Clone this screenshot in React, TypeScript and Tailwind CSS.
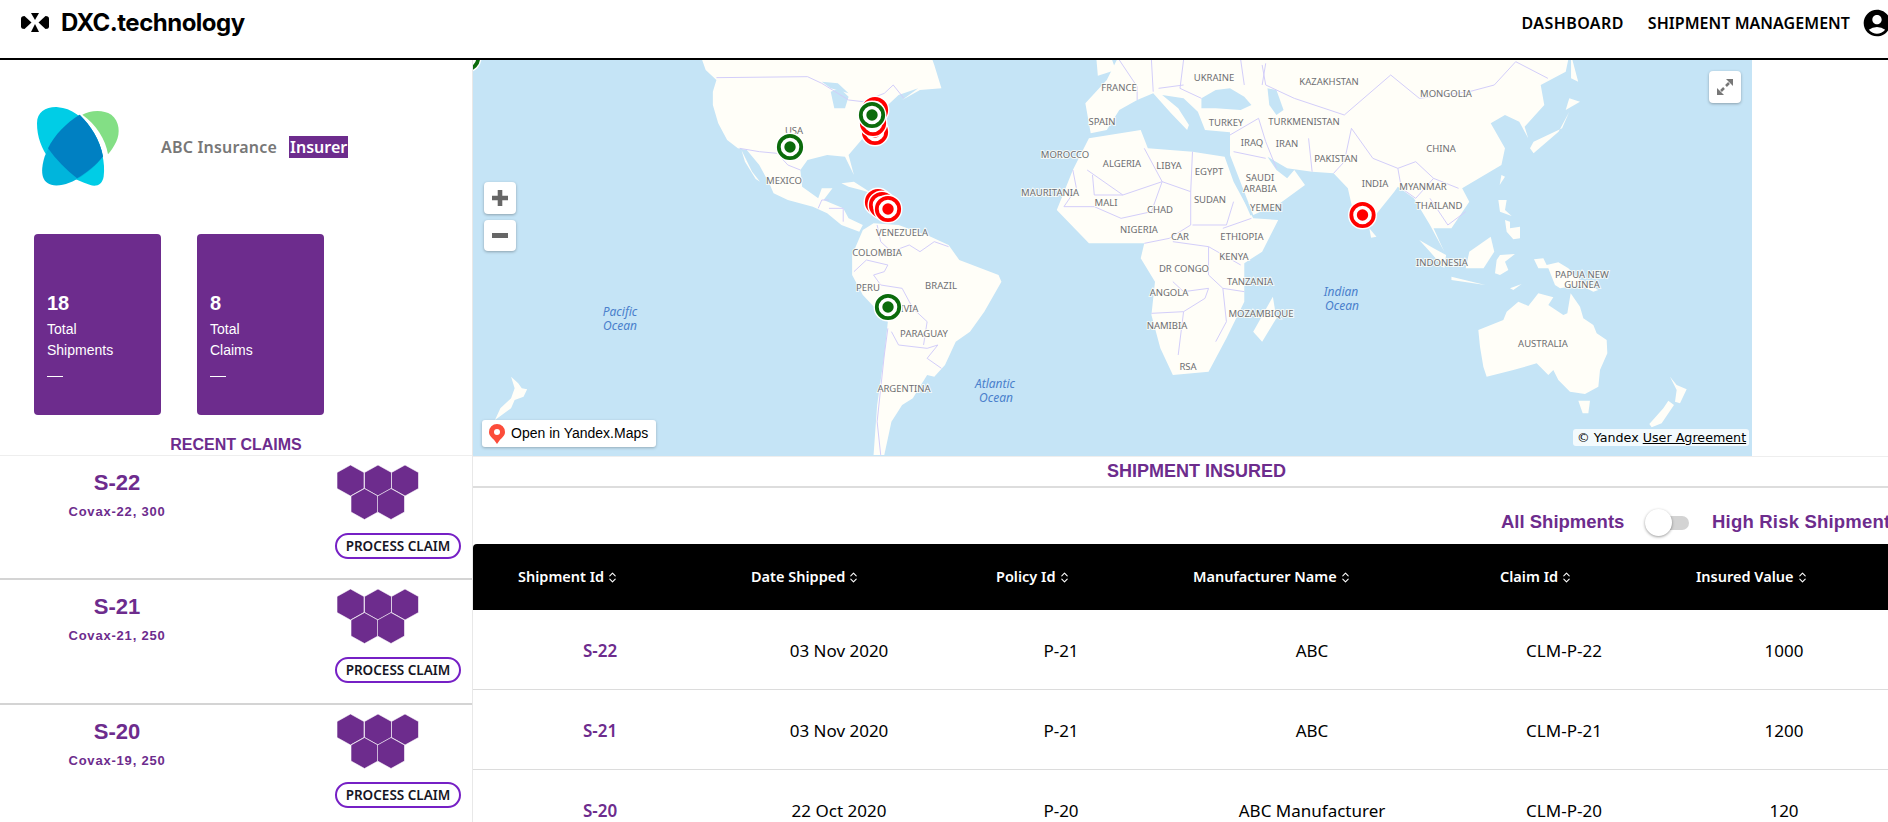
import { ChevronsUpDown } from "lucide-react";
import { MdAccountCircle } from "react-icons/md";

const SEA = "#c5e4f6";
const LAND = "#fffef8";
const LINE = "#d3cefa";

// land outlines, traced per map area (see the transforms on the groups below)
const westLand = [
  "645,0 660,45 690,75 680,110 680,150 695,205 720,255 750,280 775,285 810,330 840,390 850,415 890,435 960,455 1000,475 1040,510 1090,530 1100,510 1060,490 1045,460 990,435 1015,400 985,400 975,430 930,395 925,345 945,315 1000,300 1050,305 1075,360 1060,300 1100,250 1130,200 1170,150 1200,120 1255,100 1210,135 1260,105 1320,100 1300,30 1290,0",
  "760,285 790,350 812,380 800,372 770,320",
  "1100,525 1130,505 1200,510 1290,545 1340,570 1370,615 1480,660 1488,680 1440,770 1400,830 1360,860 1330,930 1300,965 1280,960 1240,1030 1210,1050 1180,1100 1160,1200 1130,1200 1140,1050 1160,900 1170,800 1100,720 1070,660 1070,600",
  "1040,385 1075,380 1125,415 1095,405 1060,395",
  "115,965 135,985 145,1000 160,1003 150,1025 125,1035 115,1060 70,1095 85,1060 115,1030 125,1000",
];

const eastLand = [
  "250,0 215,75 155,145 170,235 215,225 250,165 300,135 345,115 395,175 440,225 445,210 415,160 370,120 430,130 470,170 490,225 560,232 560,300 625,480 700,445 770,390 740,345 720,370 690,345 665,305 720,340 790,350 850,355 890,400 905,470 945,510 1020,410 1030,395 1075,430 1120,510 1160,590 1130,520 1180,520 1230,440 1210,400 1320,330 1330,280 1290,205 1330,180 1370,200 1395,250 1385,215 1440,150 1430,90 1500,50 1510,0",
  "165,250 310,225 330,280 455,290 545,305 570,380 625,490 695,495 650,590 600,625 600,740 550,850 500,950 400,960 365,880 340,780 350,680 310,610 320,565 165,565 75,465 120,345",
  "680,725 690,790 650,860 625,830",
  "950,520 970,545 955,548",
  "1400,280 1410,260 1490,220 1510,170 1480,230 1410,295",
  "1510,130 1540,140 1500,165",
  "1515,0 1535,80 1515,70",
  "1320,360 1330,365 1315,390",
  "1090,555 1130,580 1165,600 1160,640 1120,590",
  "1230,590 1290,545 1300,590 1270,640 1220,640",
  "1180,665 1275,690 1180,675",
  "185,0 225,0 240,45 190,62",
];

const southEastLand = [
  "-5,390 70,360 80,335 115,305 145,318 175,280 220,292 205,315 250,345 262,340 272,280 300,320 310,355 340,375 350,400 380,420 382,460 360,510 355,560 315,582 270,575 235,540 220,510 205,525 170,490 100,510 20,530 10,500 0,440",
  "295,602 330,602 325,640 308,640",
  "570,530 590,555 620,568 600,610 585,605 590,570",
  "565,602 582,615 545,670 515,682 508,672 550,625",
  "162,178 190,175 200,195 235,187 265,205 300,240 355,270 340,275 300,255 240,265 225,255 205,205 175,205",
  "60,165 105,162 75,185 85,210 60,225 45,220 50,180",
  "90,265 125,252 100,270",
  "55,0 80,0 75,30 95,48 60,35",
  "75,60 90,65 90,85 120,80 120,115 100,118 80,95",
];

const westLines = [
  "690,68 945,65 985,85 1015,105 1060,135 1100,140 1160,115 1185,90 1215,130",
  "755,280 810,290 860,295 890,330 925,345",
  "975,460 985,435 1005,435",
  "1005,460 1045,460 1045,500",
  "1140,510 1150,560 1180,590 1230,570 1260,590 1300,560 1340,575",
  "1075,650 1110,615 1170,630 1160,650 1130,660 1150,690 1210,700 1240,760 1280,800 1270,870",
  "1180,830 1200,870 1280,880 1310,870 1280,910 1320,940",
  "1170,820 1160,900 1150,1000 1140,1100 1150,1200",
];

const eastLines = [
  "160,345 260,420 370,380 450,410 455,290",
  "320,280 370,380",
  "175,360 180,420 260,420",
  "120,345 130,400 95,455 180,455 255,490 340,470 370,380",
  "450,410 450,510 390,550 320,565",
  "455,510 550,510 570,440",
  "540,520 620,490",
  "400,560 500,575 590,630",
  "500,575 500,660 540,700 600,710",
  "400,680 430,710 500,700 490,730 430,770 340,775",
  "430,770 415,900",
  "540,700 550,800 520,860",
  "650,30 660,90 740,130 880,180 1010,60 1090,130 1230,110 1300,90 1360,20 1450,70",
  "900,220 880,320 850,355",
  "780,250 790,350",
  "640,190 660,260 690,340",
  "560,240 640,190",
  "570,290 660,310",
  "900,220 960,310 1030,340 1080,320 1130,370 1200,400",
  "1030,340 1040,400 1080,430 1130,370",
  "1120,430 1170,510 1220,470",
  "250,15 300,95 300,135",
  "340,15 345,110",
  "430,15 420,100 480,130",
  "590,15 600,90",
  "360,100 430,90",
  "660,25 650,90",
];

const mapLabels: [string, number, number][] = [
  ["USA", 794, 130], ["MEXICO", 784, 180], ["VENEZUELA", 902, 232], ["COLOMBIA", 877, 252],
  ["PERU", 868, 287], ["BRAZIL", 941, 285], ["BOLIVIA", 900, 308], ["PARAGUAY", 924, 333],
  ["ARGENTINA", 904, 388], ["FRANCE", 1119, 87], ["UKRAINE", 1214, 77], ["KAZAKHSTAN", 1329, 81],
  ["MONGOLIA", 1446, 93], ["SPAIN", 1102, 121], ["TURKEY", 1226, 122], ["TURKMENISTAN", 1304, 121],
  ["IRAQ", 1252, 142], ["IRAN", 1287, 143], ["CHINA", 1441, 148], ["MOROCCO", 1065, 154],
  ["ALGERIA", 1122, 163], ["LIBYA", 1169, 165], ["EGYPT", 1209, 171], ["PAKISTAN", 1336, 158],
  ["SAUDI", 1260, 177], ["ARABIA", 1260, 188], ["INDIA", 1375, 183], ["MYANMAR", 1423, 186],
  ["MAURITANIA", 1050, 192], ["MALI", 1106, 202], ["SUDAN", 1210, 199], ["CHAD", 1160, 209],
  ["YEMEN", 1266, 207], ["THAILAND", 1439, 205], ["NIGERIA", 1139, 229], ["CAR", 1180, 236],
  ["ETHIOPIA", 1242, 236], ["KENYA", 1234, 256], ["INDONESIA", 1442, 262], ["DR CONGO", 1184, 268],
  ["TANZANIA", 1250, 281], ["ANGOLA", 1169, 292], ["MOZAMBIQUE", 1261, 313], ["NAMIBIA", 1167, 325],
  ["RSA", 1188, 366], ["PAPUA NEW", 1582, 274], ["GUINEA", 1582, 284], ["AUSTRALIA", 1543, 343],
];

const oceanLabels: [string, number, number][] = [
  ["Pacific", 620, 312], ["Ocean", 620, 326], ["Atlantic", 995, 384], ["Ocean", 996, 398],
  ["Indian", 1341, 292], ["Ocean", 1342, 306],
];

const markers: [number, number, string][] = [
  [467, 58, "#0b6b0b"], [875, 110, "#ff0000"], [875, 132, "#ff0000"], [873, 123, "#ff0000"],
  [872, 115, "#0b6b0b"], [790, 147, "#0b6b0b"], [878, 202, "#ff0000"], [882, 205, "#ff0000"],
  [888, 209, "#ff0000"], [888, 307, "#0b6b0b"], [1362.5, 215, "#ff0000"],
];

const claims = [
  { id: "S-22", sub: "Covax-22, 300" },
  { id: "S-21", sub: "Covax-21, 250" },
  { id: "S-20", sub: "Covax-19, 250" },
];

const columns = [
  { label: "Shipment Id", width: "w-[254px]", pad: "pl-[45px]" },
  { label: "Date Shipped", width: "w-[224px]", pad: "pl-[24px]" },
  { label: "Policy Id", width: "w-[220px]", pad: "pl-[45px]" },
  { label: "Manufacturer Name", width: "w-[282px]", pad: "pl-[22px]" },
  { label: "Claim Id", width: "w-[222px]", pad: "pl-[47px]" },
  { label: "Insured Value", width: "w-[218px]", pad: "pl-[21px]" },
];

const rows = [
  ["S-22", "03 Nov 2020", "P-21", "ABC", "CLM-P-22", "1000"],
  ["S-21", "03 Nov 2020", "P-21", "ABC", "CLM-P-21", "1200"],
  ["S-20", "22 Oct 2020", "P-20", "ABC Manufacturer", "CLM-P-20", "120"],
];

function DxcMark() {
  return (
    <svg width="28" height="20" viewBox="0 0 28 20" fill="#000" className="shrink-0">
      <path d="M0 5.500Q0 3 3.500 3L10.500 9.500L3.500 16Q0 16 0 13.500Z" />
      <path d="M10 0h8l-4 7Z" />
      <path d="M14 11l4 8h-8Z" />
      <path d="M28 5.500Q28 3 24.500 3L17.500 9.500L24.500 16Q28 16 28 13.500Z" />
    </svg>
  );
}

function InsurerLogo() {
  return (
    <svg width="90" height="87" viewBox="100 310 270 260" className="shrink-0">
      <path d="M248 345C270 332 310 328 335 345C360 365 362 400 350 425C342 442 335 452 325 463C318 420 290 375 248 345Z" fill="#83df85" />
      <path d="M112 370C112 335 140 320 175 322C215 325 250 350 280 395C305 435 318 490 312 530C308 555 290 562 270 555C225 540 185 520 150 480C125 445 112 410 112 370Z" fill="#00cde6" />
      <path d="M240 345C190 375 150 430 135 470C120 520 125 555 170 557C220 557 280 510 310 470C300 420 275 380 240 345Z" fill="#00b5dc" />
      <path d="M240 345C200 370 165 405 145 445C170 480 200 510 232 535C260 520 290 495 310 470C300 420 275 380 240 345Z" fill="#0080c2" />
    </svg>
  );
}

function Hexagons() {
  const hexes = [
    [13.5, 15.500], [41, 15.500], [68, 15.500], [27.500, 39], [54, 39],
  ];
  return (
    <svg width="82" height="55" viewBox="0 0 82 55" fill="#6d2c8d" className="block ml-[2px]">
      {hexes.map(([x, y], i) => (
        <polygon
          key={i}
          points={`${x},${y - 15.500} ${x + 13.500},${y - 8} ${x + 13.500},${y + 8} ${x},${y + 15.500} ${x - 13.500},${y + 8} ${x - 13.500},${y - 8}`}
          stroke="#fff"
          strokeWidth="0.6"
        />
      ))}
    </svg>
  );
}

function StatCard({ value, line1, line2 }: { value: string; line1: string; line2: string }) {
  return (
    <div className="w-[127px] h-[181px] rounded-[4px] bg-[#6d2c8d] pt-[57px] pl-[13px] text-white">
      <p className="text-[20px] leading-[24px] font-bold">{value}</p>
      <p className="mt-[4px] text-[14px] leading-[21px]">{line1}</p>
      <p className="text-[14px] leading-[21px]">{line2}</p>
      <div className="mt-[15px] w-[16px] h-px bg-white" />
    </div>
  );
}

function ClaimRow({ id, sub, first }: { id: string; sub: string; first: boolean }) {
  return (
    <div className={`h-[125px] shrink-0 flex border-b-2 border-[#d4d4d4] ${first ? "border-t border-t-[#eeeeee]" : ""}`}>
      <div className="w-[234px] pt-[15px] text-center text-[#6d2c8d] font-bold">
        <p className="text-[22px] leading-[24px]">{id}</p>
        <p className="mt-[7px] text-[13px] leading-[20px] tracking-[0.8px]">{sub}</p>
      </div>
      <div className="ml-[101px] w-[126px] pt-[9px]">
        <Hexagons />
        <button className="mt-[13px] w-[126px] h-[26px] rounded-full border-2 border-[#7620c5] bg-white font-['Noto_Sans',sans-serif] text-[13.500px] leading-[20px] font-semibold text-[#161625]">
          PROCESS CLAIM
        </button>
      </div>
    </div>
  );
}

function WorldMap() {
  return (
    <svg viewBox="473 60 1279 396" className="block w-full h-full font-['Noto_Sans',sans-serif]">
      <rect x="473" y="60" width="1279" height="396" fill={SEA} />
      <g transform="translate(470 55) scale(0.35714 0.33333)">
        {westLand.map((p) => <polygon key={p} points={p} fill={LAND} />)}
        <polygon points="1010,110 1035,100 1060,125 1050,160 1020,160" fill={SEA} />
        <polygon points="985,80 1030,85 1060,115 1010,100" fill={SEA} />
        {westLines.map((p) => <polyline key={p} points={p} fill="none" stroke={LINE} strokeWidth="1" vectorEffect="non-scaling-stroke" />)}
      </g>
      <g transform="translate(1030 55) scale(0.35714 0.33333)">
        {eastLand.map((p) => <polygon key={p} points={p} fill={LAND} />)}
        <polygon points="480,160 480,130 520,105 560,100 600,125 620,150 590,165 520,160" fill={SEA} />
        <polygon points="665,100 690,105 710,165 690,180 670,150" fill={SEA} />
        <polyline points="550,305 620,480" fill="none" stroke={SEA} strokeWidth="2" vectorEffect="non-scaling-stroke" />
        {eastLines.map((p) => <polyline key={p} points={p} fill="none" stroke={LINE} strokeWidth="1" vectorEffect="non-scaling-stroke" />)}
      </g>
      <g transform="translate(1480 200) scale(0.33333)">
        {southEastLand.map((p) => <polygon key={p} points={p} fill={LAND} />)}
      </g>
      {mapLabels.map(([name, x, y]) => (
        <text key={name} x={x} y={y + 3.500} textAnchor="middle" fontSize="9.500" fill="#6e6e72" stroke="#fffef8" strokeWidth="2" strokeOpacity="0.8" paintOrder="stroke">
          {name}
        </text>
      ))}
      {oceanLabels.map(([name, x, y]) => (
        <text key={name + x} x={x} y={y + 4} textAnchor="middle" fontSize="12" fontStyle="italic" fill="#4a80cc">
          {name}
        </text>
      ))}
      {markers.map(([x, y, color], i) => (
        <g key={i}>
          <circle cx={x} cy={y} r="14.500" fill="#fff" />
          <circle cx={x} cy={y} r="11.200" fill="#fff" stroke={color} strokeWidth="3.800" />
          <circle cx={x} cy={y} r="5.700" fill={color} />
        </g>
      ))}
    </svg>
  );
}

export default function App() {
  return (
    <div className="w-[1888px] h-[822px] overflow-hidden bg-white flex flex-col font-['Liberation_Sans',sans-serif]">
      <header className="h-[60px] shrink-0 border-b-2 border-black flex items-center justify-between pb-[12px] pl-[21px]">
        <div className="flex items-center gap-[12px]">
          <DxcMark />
          <span className="font-['Inter',sans-serif] text-[24px] font-bold tracking-[-0.5px] text-black">DXC.technology</span>
        </div>
        <nav className="flex items-center font-['Noto_Sans',sans-serif] text-[16px] font-semibold text-black mr-[-5px]">
          <a className="mr-[24px] tracking-[0.4px]">DASHBOARD</a>
          <a className="mr-[11px] tracking-[0.05px]">SHIPMENT MANAGEMENT</a>
          <MdAccountCircle size={32} className="shrink-0" />
        </nav>
      </header>

      <div className="flex flex-1 min-h-0">
        <aside className="w-[473px] shrink-0 flex flex-col border-r border-[#e8e8e8]">
          <div className="flex items-center pl-[33px] pt-[43px]">
            <InsurerLogo />
            <span className="ml-[38px] font-['Noto_Sans',sans-serif] text-[16px] font-semibold tracking-[0.2px] text-[#777777]">ABC Insurance</span>
            <span className="ml-[12px] h-[22px] px-px flex items-center bg-[#6d2c8d] font-['Noto_Sans',sans-serif] text-[16px] font-semibold text-white">Insurer</span>
          </div>
          <div className="mt-[44px] pl-[34px] flex gap-[36px]">
            <StatCard value="18" line1="Total" line2="Shipments" />
            <StatCard value="8" line1="Total" line2="Claims" />
          </div>
          <h2 className="mt-[20px] h-[21px] text-center text-[16px] leading-[20px] font-bold text-[#6d2c8d]">RECENT CLAIMS</h2>
          {claims.map((c, i) => (
            <ClaimRow key={c.id} id={c.id} sub={c.sub} first={i === 0} />
          ))}
        </aside>

        <main className="flex-1 min-w-0 flex flex-col">
          <div className="relative w-[1279px] h-[396px] shrink-0 overflow-hidden">
            <WorldMap />
            <div className="absolute left-[11px] top-[122px] flex flex-col gap-[6px]">
              <button className="w-[32px] h-[32px] rounded-[4px] bg-white shadow-[0_1px_3px_rgba(0,0,0,0.3)] grid place-items-center">
                <svg width="16" height="16" viewBox="0 0 16 16" fill="#666"><path d="M5.700 0h4.600v5.700H16v4.600h-5.700V16H5.700v-5.700H0V5.700h5.700Z" /></svg>
              </button>
              <button className="w-[32px] h-[31px] rounded-[4px] bg-white shadow-[0_1px_3px_rgba(0,0,0,0.3)] grid place-items-center">
                <svg width="16" height="5" viewBox="0 0 16 5" fill="#666"><rect width="16" height="5" /></svg>
              </button>
            </div>
            <button className="absolute left-[1236px] top-[11px] w-[32px] h-[32px] rounded-[4px] bg-white shadow-[0_1px_3px_rgba(0,0,0,0.3)] grid place-items-center">
              <svg width="16" height="16" viewBox="0 0 16 16" fill="#777" stroke="#777">
                <path d="M16 0v7L9 0Z" strokeWidth="0" />
                <path d="M12 4L9 7" strokeWidth="2.500" />
                <path d="M0 16V9l7 7Z" strokeWidth="0" />
                <path d="M4 12l3-3" strokeWidth="2.500" />
              </svg>
            </button>
            <a className="absolute left-[9px] top-[360px] h-[27px] w-[174px] rounded-[3px] bg-white shadow-[0_1px_3px_rgba(0,0,0,0.25)] flex items-center pl-[7px] text-[14px] text-black">
              <svg width="16" height="20" viewBox="0 0 16 20" className="shrink-0">
                <path d="M8 0a8 8 0 0 1 8 8c0 4-3.500 6-5.500 8.500L8 20l-2.500-3.500C3.500 14 0 12 0 8a8 8 0 0 1 8-8Z" fill="#fc4c3a" />
                <circle cx="8" cy="8" r="3" fill="#fff" />
              </svg>
              <span className="ml-[6px] whitespace-nowrap">Open in Yandex.Maps</span>
            </a>
            <div className="absolute left-[1100px] top-[369px] h-[17px] w-[176px] rounded-[3px] bg-white/80 flex items-center pl-[4px] whitespace-nowrap font-['DejaVu_Sans',sans-serif] text-[12.700px] text-black">
              © Yandex&nbsp;<span className="underline">User Agreement</span>
            </div>
          </div>

          <div className="h-[32px] shrink-0 border-t border-[#eeeeee] border-b-2 border-b-[#dddddd] pl-[32px] text-center text-[18px] leading-[29px] font-bold text-[#6d2c8d]">
            SHIPMENT INSURED
          </div>

          <div className="h-[56px] shrink-0 flex items-center pl-[1028px] pt-[12px] whitespace-nowrap text-[18.500px] font-bold text-[#6d2c8d]">
            <span className="w-[144px] shrink-0">All Shipments</span>
            <div className="relative mr-[23px] w-[44px] h-[27px] shrink-0">
              <div className="absolute left-[5px] right-0 top-[7px] h-[14px] rounded-full bg-[#d3d3d3]" />
              <div className="absolute left-0 top-0 w-[27px] h-[27px] rounded-full bg-white shadow-[0_1px_3px_rgba(0,0,0,0.4)]" />
            </div>
            <span className="shrink-0 tracking-[0.2px]">High Risk Shipments</span>
          </div>

          <div className="flex h-[66px] shrink-0 items-center rounded-tl-[4px] bg-black text-white font-['Noto_Sans',sans-serif] text-[14.500px] font-semibold w-[1420px]">
            {columns.map((c) => (
              <div key={c.label} className={`${c.width} ${c.pad} shrink-0 flex items-center gap-[2px] whitespace-nowrap`}>
                {c.label}
                <ChevronsUpDown size={13} strokeWidth={2} />
              </div>
            ))}
          </div>

          {rows.map((r) => (
            <div key={r[0]} className="flex h-[80px] shrink-0 w-[1420px] items-center pt-[2px] border-b border-[#dcdcdc] font-['Noto_Sans',sans-serif] text-[17px] text-black">
              {r.map((cell, i) => (
                <div key={i} className={`${columns[i].width} shrink-0 text-center ${i === 0 ? "font-semibold text-[#6d2c8d]" : ""}`}>
                  {cell}
                </div>
              ))}
            </div>
          ))}
        </main>
      </div>
    </div>
  );
}
